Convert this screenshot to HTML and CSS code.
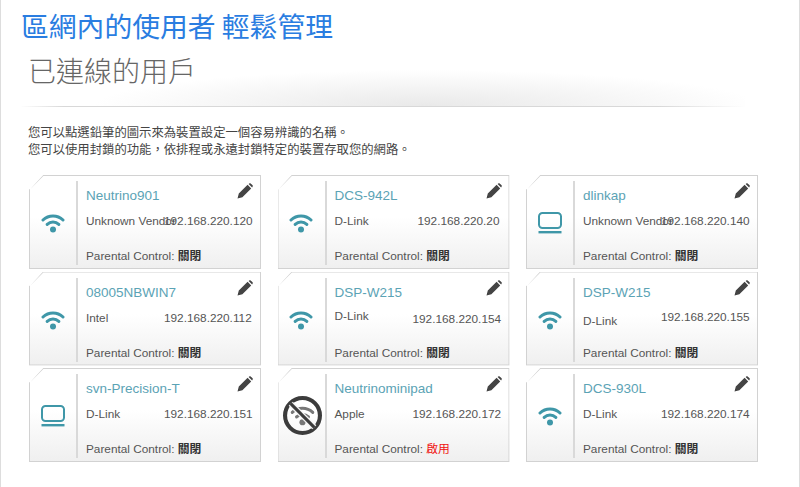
FILE: index.html
```html
<!DOCTYPE html>
<html lang="zh-Hant">
<head>
  <meta charset="UTF-8" />
  <meta name="viewport" content="width=device-width, initial-scale=1.0" />
  <title>區網內的使用者 輕鬆管理</title>
  <link rel="stylesheet" href="styles.css">
</head>
<body>
  <svg class="icon-defs" width="0" height="0">
    <symbol id="wifi" viewBox="0 0 24 20">
      <path d="M2 7 A14.5 14.5 0 0 1 22 7 M6.2 11.4 A8.4 8.4 0 0 1 17.8 11.4" fill="none" stroke="currentColor" stroke-width="3" stroke-linecap="round" />
      <circle cx="12" cy="16.6" r="3" fill="currentColor" />
    </symbol>
    <symbol id="laptop" viewBox="0 0 24 22">
      <rect x="1" y="1" width="22" height="15" rx="3.5" fill="none" stroke="currentColor" stroke-width="2" />
      <rect x="0.5" y="19" width="23" height="2.4" fill="currentColor" />
    </symbol>
    <symbol id="pencil" viewBox="0 0 16 16">
      <path d="M0.5 15.5 L1.8 10.6 L10.6 1.8 L14.2 5.4 L5.4 14.2 Z M11.6 0.9 L12.6 0.3 Q13.2 0 13.7 0.4 L15.6 2.3 Q16 2.8 15.7 3.4 L15.1 4.5 Z" fill="currentColor" />
    </symbol>
  </svg>

  <div class="page">
    <h1 class="page-title">區網內的使用者 輕鬆管理</h1>

    <div class="section-head">
      <h2>已連線的用戶</h2>
    </div>

    <p class="intro">您可以點選鉛筆的圖示來為裝置設定一個容易辨識的名稱。<br>您可以使用封鎖的功能，依排程或永遠封鎖特定的裝置存取您的網路。</p>

    <div class="client-grid">
      <div class="card">
        <div class="card-icon"><svg class="wifi-icon"><use href="#wifi" /></svg></div>
        <div class="card-body">
          <div class="card-name">Neutrino901</div>
          <svg class="edit-icon"><use href="#pencil" /></svg>
          <div class="card-row"><span class="vendor">Unknown Vendor</span><span class="ip">192.168.220.120</span></div>
          <div class="parental">Parental Control: <b>關閉</b></div>
        </div>
      </div>

      <div class="card">
        <div class="card-icon"><svg class="wifi-icon"><use href="#wifi" /></svg></div>
        <div class="card-body">
          <div class="card-name">DCS-942L</div>
          <svg class="edit-icon"><use href="#pencil" /></svg>
          <div class="card-row"><span class="vendor">D-Link</span><span class="ip">192.168.220.20</span></div>
          <div class="parental">Parental Control: <b>關閉</b></div>
        </div>
      </div>

      <div class="card">
        <div class="card-icon"><svg class="laptop-icon"><use href="#laptop" /></svg></div>
        <div class="card-body">
          <div class="card-name">dlinkap</div>
          <svg class="edit-icon"><use href="#pencil" /></svg>
          <div class="card-row"><span class="vendor">Unknown Vendor</span><span class="ip">192.168.220.140</span></div>
          <div class="parental">Parental Control: <b>關閉</b></div>
        </div>
      </div>

      <div class="card">
        <div class="card-icon"><svg class="wifi-icon"><use href="#wifi" /></svg></div>
        <div class="card-body">
          <div class="card-name">08005NBWIN7</div>
          <svg class="edit-icon"><use href="#pencil" /></svg>
          <div class="card-row"><span class="vendor">Intel</span><span class="ip">192.168.220.112</span></div>
          <div class="parental">Parental Control: <b>關閉</b></div>
        </div>
      </div>

      <div class="card">
        <div class="card-icon"><svg class="wifi-icon"><use href="#wifi" /></svg></div>
        <div class="card-body">
          <div class="card-name">DSP-W215</div>
          <svg class="edit-icon"><use href="#pencil" /></svg>
          <div class="card-row vendor-high"><span class="vendor">D-Link</span><span class="ip">192.168.220.154</span></div>
          <div class="parental">Parental Control: <b>關閉</b></div>
        </div>
      </div>

      <div class="card">
        <div class="card-icon"><svg class="wifi-icon"><use href="#wifi" /></svg></div>
        <div class="card-body">
          <div class="card-name">DSP-W215</div>
          <svg class="edit-icon"><use href="#pencil" /></svg>
          <div class="card-row ip-high"><span class="vendor">D-Link</span><span class="ip">192.168.220.155</span></div>
          <div class="parental">Parental Control: <b>關閉</b></div>
        </div>
      </div>

      <div class="card">
        <div class="card-icon"><svg class="laptop-icon"><use href="#laptop" /></svg></div>
        <div class="card-body">
          <div class="card-name">svn-Precision-T</div>
          <svg class="edit-icon"><use href="#pencil" /></svg>
          <div class="card-row"><span class="vendor">D-Link</span><span class="ip">192.168.220.151</span></div>
          <div class="parental">Parental Control: <b>關閉</b></div>
        </div>
      </div>

      <div class="card">
        <div class="card-icon">
          <svg class="blocked-icon" viewBox="0 0 38 38">
            <use href="#wifi" x="7" y="9" width="24" height="20" />
            <circle cx="19" cy="19" r="17" fill="none" stroke="#3c3c3c" stroke-width="4" />
            <path d="M7.5 7.5 L30.5 30.5" stroke="#f4f4f4" stroke-width="5.6" />
            <path d="M7.5 7.5 L30.5 30.5" stroke="#3c3c3c" stroke-width="3" />
          </svg>
        </div>
        <div class="card-body">
          <div class="card-name">Neutrinominipad</div>
          <svg class="edit-icon"><use href="#pencil" /></svg>
          <div class="card-row"><span class="vendor">Apple</span><span class="ip">192.168.220.172</span></div>
          <div class="parental">Parental Control: <b class="on">啟用</b></div>
        </div>
      </div>

      <div class="card">
        <div class="card-icon"><svg class="wifi-icon"><use href="#wifi" /></svg></div>
        <div class="card-body">
          <div class="card-name">DCS-930L</div>
          <svg class="edit-icon"><use href="#pencil" /></svg>
          <div class="card-row"><span class="vendor">D-Link</span><span class="ip">192.168.220.174</span></div>
          <div class="parental">Parental Control: <b>關閉</b></div>
        </div>
      </div>
    </div>
  </div>
</body>
</html>
```

FILE: styles.css
```css
html, body {
  height: 100%;
}

body {
  margin: 0;
  background-color: white;
  font-family: "Liberation Sans", "Noto Sans CJK TC", sans-serif;
  color: #555;
  overflow: hidden;
}

.icon-defs {
  display: block;
  height: 0;
}

.page {
  height: 100%;
  box-sizing: border-box;
  padding: 7px 0 0 20px;
  border-left: 1px solid #ddd;
  border-right: 1px solid #ddd;
}

.page-title {
  margin: 0;
  font-family: "Noto Sans CJK TC", sans-serif;
  font-size: 27.8px;
  line-height: 36px;
  font-weight: 400;
  color: #2a7de1;
}

.section-head {
  width: 724px;
  margin: 1px 0 0 0;
  padding-left: 7px;
  height: 63px;
  box-sizing: border-box;
  border-bottom: 1px solid transparent;
  border-image: linear-gradient(to right, transparent, #d8d8d8 6%, #d8d8d8 88%, transparent) 1;
  background: radial-gradient(ellipse 46% 36px at 56% 100%, #e9e9e9, rgba(255, 255, 255, 0)) bottom no-repeat;
}

.section-head h2 {
  margin: 0;
  font-family: "Noto Sans CJK TC", sans-serif;
  font-size: 28px;
  line-height: 52px;
  font-weight: 300;
  color: #666;
}

.intro {
  margin: 17px 0 0 7px;
  font-family: "Noto Sans CJK TC", sans-serif;
  font-size: 12.35px;
  line-height: 17px;
  color: #444;
}

.client-grid {
  display: grid;
  grid-template-columns: repeat(3, 232px);
  grid-auto-rows: 94px;
  column-gap: 16.5px;
  row-gap: 2.5px;
  margin: 17px 0 0 8px;
}

.card {
  display: flex;
  padding: 6px 8px 4px 0;
  box-sizing: border-box;
  position: relative;
  background: linear-gradient(to bottom, #fff 45%, #efefef 100%);
  clip-path: polygon(14px 0, 100% 0, 100% 100%, 0 100%, 0 14px);
}

/* border follows the cut corner, so it's drawn as an overlay */
.card::before {
  content: "";
  position: absolute;
  inset: 0;
  background: #d2d2d2;
  clip-path: polygon(14px 0, 100% 0, 100% 100%, 0 100%, 0 14px, 1px 14.4px, 1px calc(100% - 1px), calc(100% - 1px) calc(100% - 1px), calc(100% - 1px) 1px, 14.4px 1px, 1px 14.4px);
}

.card-icon {
  flex: 0 0 49px;
  box-sizing: border-box;
  border-right: 2px solid #d9d9d9;
  display: flex;
  align-items: center;
  justify-content: center;
  color: #3f97a8;
}

.wifi-icon {
  width: 24px;
  height: 20px;
}

.laptop-icon {
  width: 24px;
  height: 22px;
}

.blocked-icon {
  width: 39px;
  height: 39px;
  margin-left: 2px;
  margin-top: -2px;
  color: #777;
}

.card-body {
  flex: 1;
  position: relative;
  padding: 0 2px 0 8px;
  font-size: 11.8px;
  min-width: 0;
}

.card-name {
  margin-top: 7px;
  font-size: 13.5px;
  line-height: 16px;
  color: #5ba3b5;
}

.edit-icon {
  position: absolute;
  top: 2px;
  right: 0;
  width: 16px;
  height: 16px;
  color: #444;
}

.card-row {
  display: flex;
  justify-content: space-between;
  align-items: center;
  margin-top: 9px;
  height: 16px;
  line-height: 16px;
}

.vendor {
  flex: 0 0 78px;
  min-width: 0;
  white-space: nowrap;
}

.vendor-high .vendor {
  position: relative;
  top: -2px;
}

.ip-high .vendor {
  position: relative;
  top: 3px;
}

.vendor-high .ip {
  position: relative;
  top: 1px;
}

.ip-high .ip {
  position: relative;
  top: -1px;
}

.parental {
  margin-top: 19px;
  line-height: 16px;
}

.parental b {
  color: #333;
}

.parental b.on {
  color: #f01010;
  font-weight: normal;
}
```
